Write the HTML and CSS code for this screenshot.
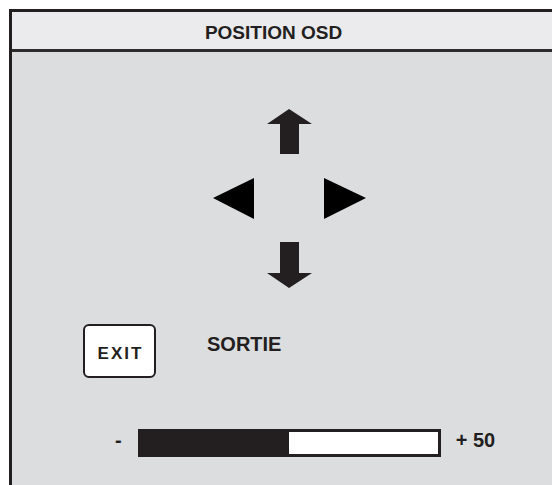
FILE: index.html
```html
<!DOCTYPE html>
<html>
<head>
    <title>Position OSD</title>
    <link rel="stylesheet" href="styles.css">
</head>
<body>
    <div class="frame">
        <div class="header">
            <div class="title">POSITION OSD</div>
        </div>

        <div class="panel">
            <svg class="arrows" width="154" height="180" viewBox="0 0 154 180">
                <!-- up -->
                <path d="M76 0 L99 15 L86 15 L86 45 L67 45 L67 15 L54 15 Z" fill="#231f20"/>
                <!-- left -->
                <path d="M0 89 L41 69 L41 110 Z" fill="#000"/>
                <!-- right -->
                <path d="M111 69 L153 89 L111 110 Z" fill="#000"/>
                <!-- down -->
                <path d="M67 133 L86 133 L86 164 L99 164 L76 179 L54 164 L67 164 Z" fill="#231f20"/>
            </svg>

            <div class="exit-row">
                <div class="exit-key">EXIT</div>
                <div class="exit-label">SORTIE</div>
            </div>

            <div class="slider-row">
                <span class="minus">-</span>
                <div class="bar">
                    <div class="fill" style="width: 50%"></div>
                </div>
                <span class="value">+ 50</span>
            </div>
        </div>
    </div>
</body>
</html>
```

FILE: styles.css
```css
body {
    margin: 0;
    background: #fff;
    overflow: hidden;
    font-family: "Liberation Sans", Arial, sans-serif;
    color: #231f20;
}
.frame {
    margin: 9px 0 0 9px;
    width: 540px;
    height: 473px;
    border-top: 3px solid #231f20;
    border-left: 3px solid #231f20;
    background: #dcdddf;
}
.header {
    height: 37px;
    background: #ebebed;
    border-bottom: 3px solid #2e2b2c;
}
.title {
    width: 523px;
    padding-top: 5px;
    text-align: center;
    font-size: 19px;
    font-weight: bold;
    line-height: 32px;
}
.arrows {
    display: block;
    margin: 57px 0 0 201px;
}
.exit-row {
    display: flex;
    align-items: flex-start;
    margin-top: 35px;
}
.exit-key {
    margin-left: 71px;
    width: 73px;
    height: 54px;
    box-sizing: border-box;
    border: 2px solid #231f20;
    border-radius: 6px;
    background: #fff;
    padding-top: 19px;
    padding-left: 2px;
    text-align: center;
    font-size: 17px;
    font-weight: bold;
    line-height: 17px;
    letter-spacing: 2px;
}
.exit-label {
    margin: 10px 0 0 51px;
    font-size: 20px;
    font-weight: bold;
    line-height: 20px;
}
.slider-row {
    display: flex;
    align-items: flex-start;
    margin-top: 51px;
}
.minus, .value {
    font-size: 20px;
    font-weight: bold;
    line-height: 22px;
}
.minus {
    margin-left: 103px;
}
.bar {
    margin-left: 16px;
    width: 303px;
    height: 28px;
    box-sizing: border-box;
    border: 3px solid #231f20;
    background: #fff;
}
.fill {
    height: 100%;
    background: #231f20;
}
.value {
    margin-left: 15px;
}
```
